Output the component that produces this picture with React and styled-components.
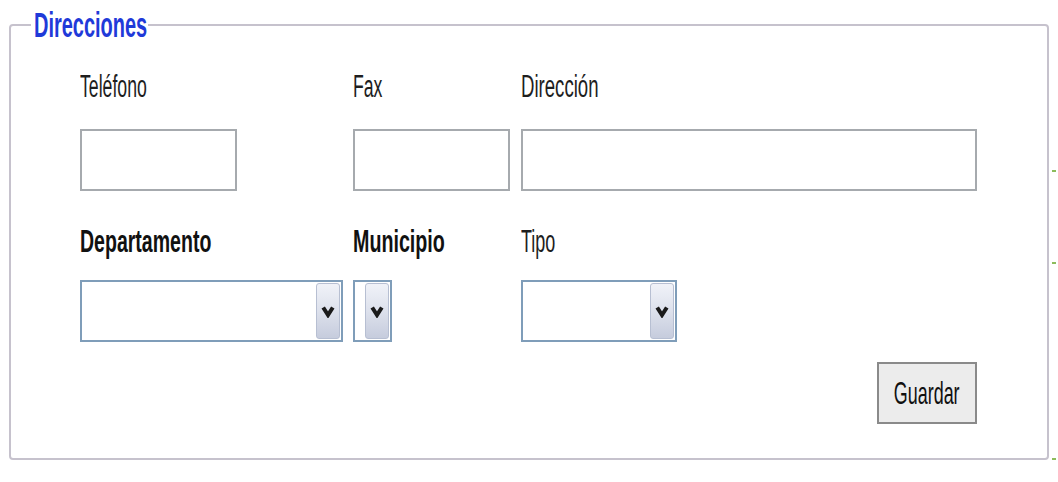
import React from 'react';
import styled, { createGlobalStyle } from 'styled-components';

const GlobalStyle = createGlobalStyle`
  html, body {
    margin: 0;
    padding: 0;
    background: #fff;
  }
  body {
    font-family: "Liberation Sans", Arial, sans-serif;
  }
`;

const Page = styled.div`
  display: flex;
  align-items: flex-start;
  width: 1058px;
  height: 482px;
  padding: 8px 0 0 9px;
  box-sizing: border-box;
  overflow: hidden;
`;

const Fieldset = styled.fieldset`
  margin: 0;
  padding: 29px 0 34px 0;
  width: 1040px;
  box-sizing: border-box;
  border: 2px solid #c6c2cd;
  border-radius: 4px;
`;

const Legend = styled.legend`
  margin-left: 20px;
  padding: 0 3px;
  width: 111px;
  height: 34px;
  font-size: 35px;
  line-height: 34px;
  font-weight: 700;
  color: #1f3ad9;
  overflow: visible;
`;

const Body = styled.div`
  padding-left: 69px;
`;

// the reference text is tall and narrow, so glyphs get squeezed sideways
const Squish = styled.span`
  display: inline-block;
  flex: none;
  white-space: nowrap;
  transform: scaleX(${({ $x }) => $x});
  transform-origin: ${({ $origin }) => $origin || 'left center'};
`;

const Grid = styled.div`
  display: grid;
  grid-template-columns: 263px 158px 456px;
  column-gap: 10px;
  row-gap: 35px;
  width: 897px;
`;

const Field = styled.div`
  display: flex;
  flex-direction: column;
  align-items: flex-start;
  gap: ${({ $gap }) => $gap}px;
`;

const Label = styled.label`
  display: block;
  height: 31px;
  font-size: 31px;
  line-height: 31px;
  font-weight: ${({ $bold }) => ($bold ? 700 : 400)};
  color: ${({ $bold }) => ($bold ? '#111' : '#1e1e1e')};
`;

const TextInput = styled.input`
  width: ${({ $w }) => $w}px;
  height: 62px;
  box-sizing: border-box;
  margin: 0;
  padding: 0 4px;
  border: 2px solid #a6aaae;
  background: #fff;
  font-size: 20px;
  outline: none;
`;

const Select = styled.div`
  display: flex;
  justify-content: flex-end;
  width: ${({ $w }) => $w}px;
  height: 62px;
  box-sizing: border-box;
  padding: 1px;
  border: 2px solid #7f9db9;
  background: #fff;
`;

const SelectButton = styled.span`
  display: flex;
  align-items: center;
  justify-content: center;
  width: 24px;
  box-sizing: border-box;
  border: 1px solid #b7bfd2;
  border-radius: 3px;
  background: linear-gradient(to bottom, #f0f2f8 0%, #dde1ec 50%, #c6ccdd 100%);
`;

const Actions = styled.div`
  display: flex;
  justify-content: flex-end;
  width: 897px;
  margin-top: 20px;
`;

const Button = styled.button`
  display: flex;
  align-items: center;
  justify-content: center;
  width: 100px;
  height: 62px;
  margin: 0;
  padding: 0;
  border: 2px solid #8a8a8a;
  background: #ececec;
  color: #111;
  font-family: inherit;
  font-size: 32px;
  line-height: 1;
  cursor: pointer;
`;

const Ticks = styled.div`
  display: flex;
  flex-direction: column;
  margin-left: 3px;
`;

const Tick = styled.span`
  display: block;
  width: 4px;
  height: 2px;
  margin-top: ${({ $top }) => $top}px;
  background: #8cbc5c;
`;

const Chevron = () => (
  <svg width="14" height="13" viewBox="0 0 14 13">
    <path d="M2.2 2.5 L7 10 L11.8 2.5" fill="none" stroke="#1a1a1a" strokeWidth="4" strokeLinejoin="miter" />
  </svg>
);

const Dropdown = ({ width }) => (
  <Select $w={width} role="combobox">
    <SelectButton>
      <Chevron />
    </SelectButton>
  </Select>
);

const top = [
  { label: 'Teléfono', width: 157, x: 0.57 },
  { label: 'Fax', width: 157, x: 0.57 },
  { label: 'Dirección', width: 456, x: 0.6 },
];

const bottom = [
  { label: 'Departamento', width: 263, bold: true, x: 0.63 },
  { label: 'Municipio', width: 39, bold: true, x: 0.635 },
  { label: 'Tipo', width: 156, x: 0.58 },
];

export default function App() {
  return (
    <>
      <GlobalStyle />
      <Page>
        <Fieldset>
          <Legend>
            <Squish $x={0.57}>Direcciones</Squish>
          </Legend>
          <Body>
            <Grid>
              {top.map((f) => (
                <Field key={f.label} $gap={27}>
                  <Label>
                    <Squish $x={f.x}>{f.label}</Squish>
                  </Label>
                  <TextInput $w={f.width} type="text" />
                </Field>
              ))}
              {bottom.map((f) => (
                <Field key={f.label} $gap={23}>
                  <Label $bold={f.bold}>
                    <Squish $x={f.x}>{f.label}</Squish>
                  </Label>
                  <Dropdown width={f.width} />
                </Field>
              ))}
            </Grid>
            <Actions>
              <Button type="button">
                <Squish $x={0.56} $origin="center">Guardar</Squish>
              </Button>
            </Actions>
          </Body>
        </Fieldset>
        <Ticks>
          <Tick $top={162} />
          <Tick $top={90} />
          <Tick $top={194} />
        </Ticks>
      </Page>
    </>
  );
}
